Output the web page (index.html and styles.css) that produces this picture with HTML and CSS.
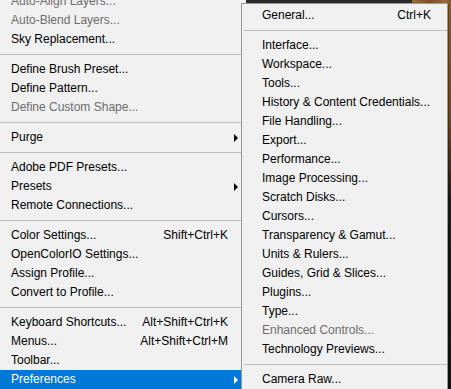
FILE: index.html
```html
<!DOCTYPE html>
<html>
<head>
<meta charset="utf-8">
<link rel="stylesheet" href="styles.css">
</head>
<body>
<div class="stage">
  <div class="backdrop-top"></div>
  <div class="backdrop-right"></div>
  <div class="menu main">
    <div class="item disabled"><span class="label">Auto-Align Layers...</span></div>
    <div class="item disabled"><span class="label">Auto-Blend Layers...</span></div>
    <div class="item"><span class="label">Sky Replacement...</span></div>
    <div class="sep"></div>
    <div class="item"><span class="label">Define Brush Preset...</span></div>
    <div class="item"><span class="label">Define Pattern...</span></div>
    <div class="item disabled"><span class="label">Define Custom Shape...</span></div>
    <div class="sep"></div>
    <div class="item sub"><span class="label">Purge</span><span class="arrow"></span></div>
    <div class="sep"></div>
    <div class="item"><span class="label">Adobe PDF Presets...</span></div>
    <div class="item sub"><span class="label">Presets</span><span class="arrow"></span></div>
    <div class="item"><span class="label">Remote Connections...</span></div>
    <div class="sep"></div>
    <div class="item"><span class="label">Color Settings...</span><span class="key">Shift+Ctrl+K</span></div>
    <div class="item"><span class="label">OpenColorIO Settings...</span></div>
    <div class="item"><span class="label">Assign Profile...</span></div>
    <div class="item"><span class="label">Convert to Profile...</span></div>
    <div class="sep"></div>
    <div class="item"><span class="label">Keyboard Shortcuts...</span><span class="key">Alt+Shift+Ctrl+K</span></div>
    <div class="item"><span class="label">Menus...</span><span class="key">Alt+Shift+Ctrl+M</span></div>
    <div class="item"><span class="label">Toolbar...</span></div>
    <div class="item sub active"><span class="label">Preferences</span><span class="arrow"></span></div>
  </div>
  <div class="menu submenu">
    <div class="item"><span class="label">General...</span><span class="key">Ctrl+K</span></div>
    <div class="sep"></div>
    <div class="item"><span class="label">Interface...</span></div>
    <div class="item"><span class="label">Workspace...</span></div>
    <div class="item"><span class="label">Tools...</span></div>
    <div class="item"><span class="label">History &amp; Content Credentials...</span></div>
    <div class="item"><span class="label">File Handling...</span></div>
    <div class="item"><span class="label">Export...</span></div>
    <div class="item"><span class="label">Performance...</span></div>
    <div class="item"><span class="label">Image Processing...</span></div>
    <div class="item"><span class="label">Scratch Disks...</span></div>
    <div class="item"><span class="label">Cursors...</span></div>
    <div class="item"><span class="label">Transparency &amp; Gamut...</span></div>
    <div class="item"><span class="label">Units &amp; Rulers...</span></div>
    <div class="item"><span class="label">Guides, Grid &amp; Slices...</span></div>
    <div class="item"><span class="label">Plugins...</span></div>
    <div class="item"><span class="label">Type...</span></div>
    <div class="item disabled"><span class="label">Enhanced Controls...</span></div>
    <div class="item"><span class="label">Technology Previews...</span></div>
    <div class="sep"></div>
    <div class="item"><span class="label">Camera Raw...</span></div>
  </div>
</div>
</body>
</html>
```

FILE: styles.css
```css
html, body {
  margin: 0;
  padding: 0;
  background: #141414;
}

.stage {
  position: relative;
  width: 451px;
  height: 389px;
  overflow: hidden;
  font-family: "Liberation Sans", Arial, sans-serif;
  font-size: 12px;
  color: #000;
}

.backdrop-top {
  position: absolute;
  left: 0;
  top: 0;
  width: 451px;
  height: 3px;
  background: linear-gradient(to right, #2b2b2b 0 412px, #9a6a35 412px, #7b4f24 430px, #a37540 451px);
}

.backdrop-right {
  position: absolute;
  left: 447px;
  top: 0;
  width: 4px;
  height: 389px;
  background: linear-gradient(to bottom, #8a5c2c 0, #6b4520 120px, #1a1a1a 200px, #111 389px);
}

.menu {
  display: flex;
  flex-direction: column;
  background: #f0f0f0;
}

.main {
  position: relative;
  width: 246px;
  margin-top: -8px;
  height: 397px;
}

.item {
  position: relative;
  display: flex;
  align-items: center;
  justify-content: space-between;
  height: 19px;
  line-height: 19px;
  white-space: nowrap;
}

.main .item {
  padding: 0 18px 0 11px;
}

.item.disabled {
  color: #6d6d6d;
}

.item.active {
  background: #0078d7;
  color: #fff;
  margin-right: 5px;
  padding-right: 13px;
}

.arrow {
  position: absolute;
  right: 8px;
  top: 6px;
  width: 0;
  height: 0;
  border-left: 4px solid #000;
  border-top: 4px solid transparent;
  border-bottom: 4px solid transparent;
}

.main .active .arrow {
  right: 3px;
  border-left-color: #fff;
}

.sep {
  height: 11px;
  flex: none;
  position: relative;
}

.sep::after {
  content: "";
  position: absolute;
  left: 0;
  right: 5px;
  top: 5px;
  height: 1px;
  background: #bdbdbd;
}

.submenu {
  position: absolute;
  left: 241px;
  top: 3px;
  width: 207px;
  height: 400px;
  box-sizing: border-box;
  border: 1px solid #989898;
  padding-top: 2px;
  box-shadow: 1px 1px 0 rgba(0, 0, 0, 0.3);
}

.submenu .item {
  padding: 0 16px 0 20px;
}

.submenu .sep::after {
  left: 2px;
  right: 0;
}
```
